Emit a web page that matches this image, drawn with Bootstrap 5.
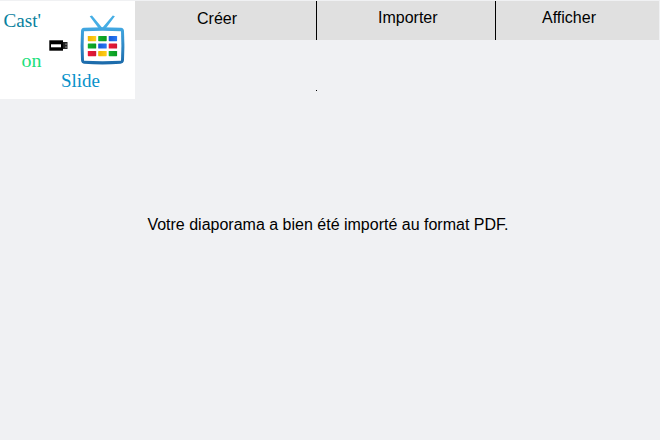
<!DOCTYPE html>
<html lang="fr">
<head>
<meta charset="utf-8">
<meta name="viewport" content="width=device-width, initial-scale=1">
<title>Cast' on Slide</title>
<link href="https://cdn.jsdelivr.net/npm/bootstrap@5.3.0/dist/css/bootstrap.min.css" rel="stylesheet">
<style>
body { background: #f0f1f3; color: #000; font: 16px/24px "Liberation Sans", Arial, sans-serif; height: 440px; overflow: hidden; }
.site-head { padding: 1px 1px 0 0; height: 99px; }
.logo { width: 135px; height: 98px; background: #fff; }
.logo text { font-family: "Palatino Linotype", Palatino, "Liberation Serif", serif; font-size: 19.5px; }
.menu { height: 39px; background: #e0e0e0; }
.menu a { color: #000; height: 39px; }
.m-create { width: 182px; padding: 6px 0 0 62px; border-right: 1px solid #000; }
.m-import { width: 179px; padding: 5px 0 0 61px; border-right: 1px solid #000; }
.m-show { padding: 5px 0 0 46px; }
.dot { width: 1px; height: 1px; margin: 50px 0 0 181px; background: #000; }
.message { margin: 114px 0 0 147.4px; }
</style>
</head>
<body>
<header class="site-head d-flex">
  <svg class="logo flex-shrink-0 d-block" viewBox="0 1 135 98" role="img" aria-label="Cast' on Slide">
    <defs>
      <linearGradient id="frame" x1="0" y1="0" x2="0" y2="1"><stop offset="0" stop-color="#43a9e3"/><stop offset="1" stop-color="#1b69a9"/></linearGradient>
      <linearGradient id="yellow" x1="0" x2="1"><stop offset="0" stop-color="#f0b400"/><stop offset="1" stop-color="#ffce18"/></linearGradient>
      <linearGradient id="green" x1="0" x2="1"><stop offset="0" stop-color="#16b02c"/><stop offset="1" stop-color="#079a20"/></linearGradient>
      <linearGradient id="blue" x1="0" x2="1"><stop offset="0" stop-color="#1659d8"/><stop offset="1" stop-color="#2878f4"/></linearGradient>
      <linearGradient id="red" x1="0" x2="1"><stop offset="0" stop-color="#ee1736"/><stop offset="1" stop-color="#cf1735"/></linearGradient>
    </defs>
    <text x="3.5" y="27" fill="#087f9e" textLength="37.5" lengthAdjust="spacingAndGlyphs">Cast'</text>
    <text x="21.5" y="66.500" fill="#20e07c" textLength="20" lengthAdjust="spacingAndGlyphs">on</text>
    <text x="61" y="86.500" fill="#0892ca" textLength="39" lengthAdjust="spacingAndGlyphs">Slide</text>
    <path d="M49.300 40.300h13.700v10.400H49.300z" fill="#000"/>
    <path d="M51 44.300h10v3H51z" fill="#fff"/>
    <path d="M63 42h4.500v7H63z" fill="#222"/>
    <path d="M65 43.500h2v1.300h-2zM65 46.500h2v1.300h-2z" fill="#777"/>
    <path d="M89.700 16.200l2.300-.6L102.800 28.500h-4zM112.800 15.500l2.100.8L105.700 28.500h-4z" fill="#45aee5"/>
    <path d="M84 27.800Q102.500 26.500 121 27.800Q123.800 28.200 124 31Q124.800 46 124 60Q123.800 63.300 120.500 63.800Q102.500 65 84 63.800Q81.200 63.300 81 60Q80.200 46 81 31Q81.200 28.200 84 27.800z" fill="url(#frame)"/>
    <path d="M84 31.200Q102.500 30.200 121 31.200Q121.800 46 121 60.800Q102.500 61.500 84 60.800Q83.200 46 84 31.200z" fill="#fff"/>
    <g>
      <rect x="87.800" y="36" width="8.400" height="5.200" rx=".6" fill="url(#yellow)"/>
      <rect x="98.200" y="36" width="8.500" height="5.200" rx=".6" fill="url(#green)"/>
      <rect x="108.700" y="36" width="8.400" height="5.200" rx=".6" fill="url(#blue)"/>
      <rect x="87.800" y="43.400" width="8.400" height="5.200" rx=".6" fill="url(#green)"/>
      <rect x="98.200" y="43.400" width="8.500" height="5.200" rx=".6" fill="url(#blue)"/>
      <rect x="108.700" y="43.400" width="8.400" height="5.200" rx=".6" fill="url(#red)"/>
      <rect x="87.800" y="51" width="8.400" height="5.200" rx=".6" fill="url(#red)"/>
      <rect x="98.200" y="51" width="8.500" height="5.200" rx=".6" fill="url(#yellow)"/>
      <rect x="108.700" y="51" width="8.400" height="5.200" rx=".6" fill="url(#green)"/>
    </g>
  </svg>
  <div class="flex-grow-1">
    <nav class="menu d-flex">
      <a class="m-create text-decoration-none" href="#">Créer</a>
      <a class="m-import text-decoration-none" href="#">Importer</a>
      <a class="m-show flex-grow-1 text-decoration-none" href="#">Afficher</a>
    </nav>
    <div class="dot"></div>
  </div>
</header>
<main>
  <p class="message">Votre diaporama a bien été importé au format PDF.</p>
</main>
<script src="https://cdn.jsdelivr.net/npm/bootstrap@5.3.0/dist/js/bootstrap.bundle.min.js"></script>
</body>
</html>
